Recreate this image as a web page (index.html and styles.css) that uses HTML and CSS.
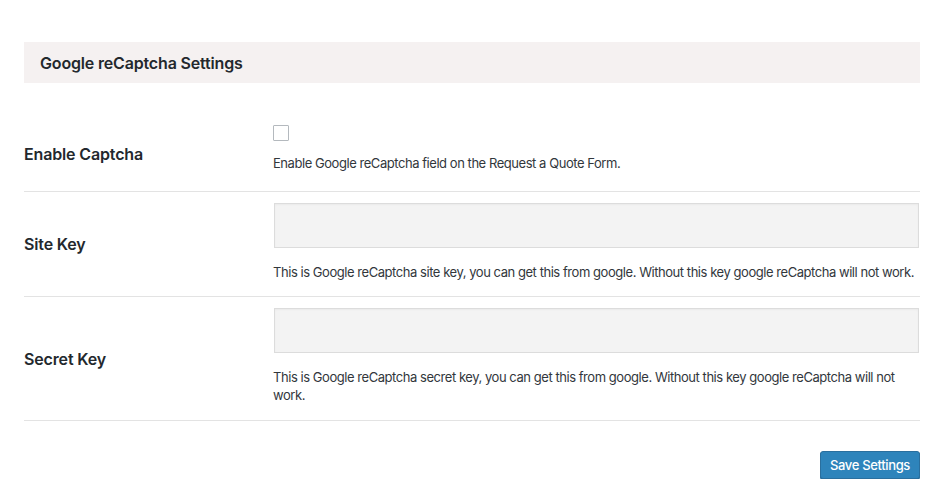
FILE: index.html
```html
<!DOCTYPE html>
<html>
<head>
<meta charset="utf-8">
<link rel="stylesheet" href="styles.css">
</head>
<body>
<div class="page">
  <div class="section-head">Google reCaptcha Settings</div>
  <div class="form">
    <div class="row row-first">
      <div class="label">Enable Captcha</div>
      <div class="field">
        <span class="checkbox"></span>
        <p class="desc">Enable Google reCaptcha field on the Request a Quote Form.</p>
      </div>
    </div>
    <div class="row">
      <div class="label">Site Key</div>
      <div class="field">
        <input class="text-input" type="text">
        <p class="desc">This is Google reCaptcha site key, you can get this from google. Without this key google reCaptcha will not work.</p>
      </div>
    </div>
    <div class="row row-last">
      <div class="label">Secret Key</div>
      <div class="field">
        <input class="text-input" type="text">
        <p class="desc">This is Google reCaptcha secret key, you can get this from google. Without this key google reCaptcha will not work.</p>
      </div>
    </div>
  </div>
  <div class="actions">
    <button class="btn-primary" type="button">Save Settings</button>
  </div>
</div>
</body>
</html>
```
FILE: styles.css
```css
html, body {
  margin: 0;
  padding: 0;
  background: #ffffff;
}
body {
  font-family: Inter, "Liberation Sans", sans-serif;
  color: #23282d;
}
.page {
  padding: 42px 21px 0 24px;
}
.section-head {
  background: #f5f1f1;
  height: 41px;
  display: flex;
  align-items: center;
  padding-left: 16px;
  font-size: 16px;
  font-weight: 600;
  letter-spacing: -0.17px;
  color: #23282d;
}
.form {
  margin-top: 34px;
}
.row {
  display: grid;
  grid-template-columns: 249px 1fr;
  align-items: center;
  border-bottom: 1px solid #e3e3e3;
}
.label {
  font-size: 16px;
  font-weight: 600;
  letter-spacing: -0.15px;
  color: #23282d;
}
.field {
  padding: 11px 0 15px 0;
  display: flex;
  flex-direction: column;
  align-items: flex-start;
}
.row-first .field {
  padding-top: 8px;
  padding-bottom: 19px;
}
.row-last .field {
  padding-bottom: 16px;
}
.checkbox {
  display: block;
  width: 14px;
  height: 14px;
  border: 1px solid #b4b9be;
  background: #fff;
  border-radius: 1px;
}
.row-first .desc {
  margin-top: 13px;
}
.text-input {
  box-sizing: border-box;
  width: calc(100% - 2px);
  margin: 0 0 0 1px;
  height: 45px;
  border: 1px solid #dcdcdc;
  background: #f3f3f3;
  box-shadow: inset 0 1px 2px rgba(0,0,0,0.04);
  border-radius: 0;
}
.desc {
  margin: 15px 0 0 0;
  font-size: 13px;
  line-height: 18px;
  letter-spacing: -0.45px;
  color: #32373c;
}
.actions {
  display: flex;
  justify-content: flex-end;
  padding-top: 30px;
}
.btn-primary {
  box-sizing: border-box;
  width: 100px;
  height: 28px;
  background: #2e84bb;
  border: 1px solid #2a6f9e;
  border-radius: 3px;
  color: #ffffff;
  font-family: Inter, "Liberation Sans", sans-serif;
  font-size: 13px;
  font-weight: 500;
  letter-spacing: -0.35px;
  padding: 0;
  box-shadow: 0 1px 0 #246b99;
}
```
